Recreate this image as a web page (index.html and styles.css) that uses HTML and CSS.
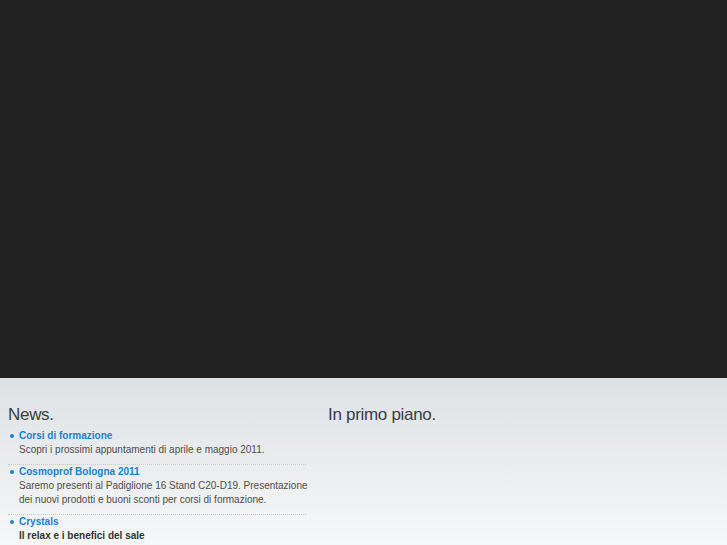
FILE: index.html
```html
<!DOCTYPE html>
<html lang="it">
<head>
<meta charset="utf-8">
<title>News</title>
<link rel="stylesheet" href="styles.css">
</head>
<body>
<div class="hero"></div>
<main class="content">
  <section class="col news">
    <h2 class="heading">News.</h2>
    <ul class="news-list">
      <li class="item">
        <a class="title" href="#">Corsi di formazione</a>
        <p class="text">Scopri i prossimi appuntamenti di aprile e maggio 2011.</p>
      </li>
      <li class="item">
        <a class="title" href="#">Cosmoprof Bologna 2011</a>
        <p class="text">Saremo presenti al Padiglione 16 Stand C20-D19. Presentazione dei nuovi prodotti e buoni sconti per corsi di formazione.</p>
      </li>
      <li class="item">
        <a class="title" href="#">Crystals</a>
        <p class="text strong">Il relax e i benefici del sale</p>
      </li>
    </ul>
  </section>
  <section class="col featured">
    <h2 class="heading">In primo piano.</h2>
  </section>
</main>
</body>
</html>
```
FILE: styles.css
```css
html, body {
  margin: 0;
  padding: 0;
}
body {
  font-family: "Liberation Sans", Arial, sans-serif;
  background: #f5f6f7;
  color: #555;
  overflow: hidden;
  height: 545px;
}
.hero {
  height: 378px;
  background: #222222;
}
.content {
  display: flex;
  gap: 22px;
  padding: 0 8px;
  height: 167px;
  overflow: hidden;
  background: linear-gradient(#dee1e4, #f6f7f8);
}
.col.news {
  width: 298px;
}
.heading {
  margin: 27px 0 4px;
  font-size: 17px;
  letter-spacing: -0.3px;
  font-weight: normal;
  color: #3a3d40;
  line-height: 20px;
}
.news-list {
  list-style: none;
  margin: 0;
  padding: 0;
}
.item {
  border-bottom: 1px dotted #c8cacc;
  padding: 0 0 7px 11px;
  position: relative;
}
.item::before {
  content: "";
  position: absolute;
  left: 2px;
  top: 5px;
  width: 4px;
  height: 4px;
  border-radius: 50%;
  background: #1a7fd6;
}
.title {
  display: block;
  font-size: 10px;
  font-weight: bold;
  line-height: 14px;
  color: #1a7fd6;
  text-decoration: none;
}
.text {
  margin: 0 -8px 0 0;
  font-size: 10px;
  line-height: 14px;
  color: #4d4d4d;
}
.text.strong {
  font-weight: bold;
  color: #333;
}
```
